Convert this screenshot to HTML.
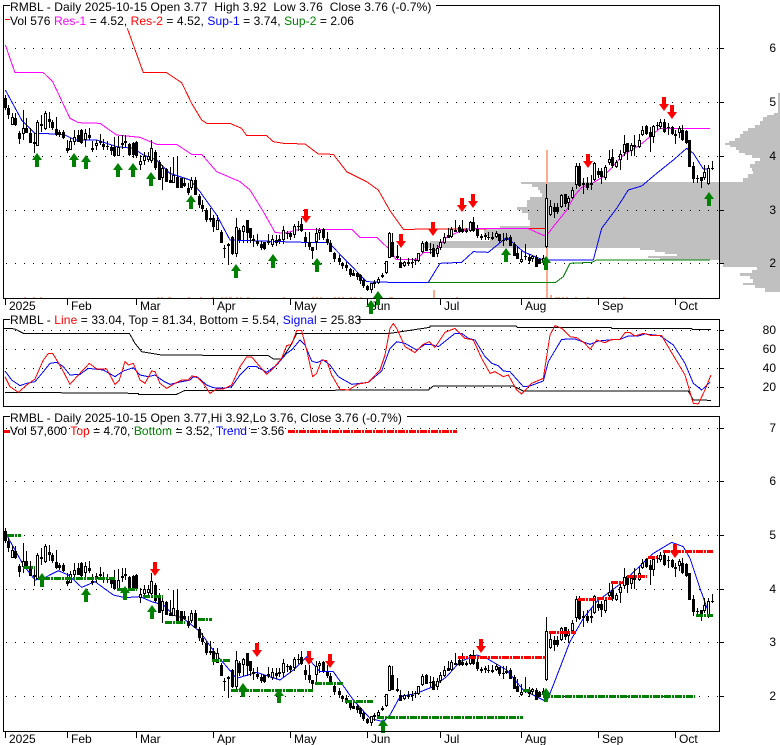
<!DOCTYPE html>
<html><head><meta charset="utf-8"><title>RMBL</title>
<style>
html,body{margin:0;padding:0;background:#fff;width:780px;height:745px;overflow:hidden}
svg{display:block;position:absolute;left:0;top:0}
text{font-family:"Liberation Sans",Arial,sans-serif;font-size:12px;fill:#000;white-space:pre}
.l{fill:none;shape-rendering:crispEdges}
.z{fill:none;stroke-width:3;stroke-linejoin:round;shape-rendering:crispEdges}
.dr{fill:none;stroke:#f00;stroke-width:3;stroke-dasharray:7 1 2 1;shape-rendering:crispEdges}
.dg{fill:none;stroke:#008000;stroke-width:3;stroke-dasharray:7 1 2 1;shape-rendering:crispEdges}
</style></head><body>
<svg width="780" height="745" viewBox="0 0 780 745" xmlns="http://www.w3.org/2000/svg">
<defs>
<path id="u" d="M0 0L5 7H2V14H-2V7H-5Z" fill="#008000"/>
<path id="d" d="M0 0L-5-7H-2V-14H2V-7H5Z" fill="#f00"/>
<g id="candles">
<path class="l" stroke="#000" stroke-width="1" d="M5.5 95V110M8.5 105V119M12.5 113V125M15.5 113V126M19.5 131V144M23.5 110V140M26.5 118V133M30.5 128V143M34.5 133V153M37.5 120V146M41.5 115V132M45.5 111V130M49.5 112V128M52.5 120V130M56.5 117V136M59.5 130V137M63.5 130V139M67.5 140V153M70.5 138V150M74.5 130V145M78.5 130V142M81.5 129V144M85.5 129V147M89.5 128V140M92.5 141V152M96.5 140V150M100.5 134V145M103.5 139V150M107.5 141V150M111.5 145V155M114.5 137V157M118.5 136V156M122.5 135V149M125.5 135V147M129.5 143V156M133.5 142V158M136.5 141V158M140.5 155V170M144.5 152V165M148.5 152V162M151.5 140V163M155.5 150V170M159.5 160V180M162.5 165V190M166.5 168V182M170.5 167V183M173.5 157V183M177.5 156V188M181.5 178V188M184.5 178V187M188.5 183V195M191.5 177V190M195.5 177V195M199.5 194V208M202.5 200V212M206.5 208V222M210.5 208V222M213.5 215V232M217.5 215V222M221.5 230V243M224.5 245V258M228.5 243V265M232.5 236V255M236.5 218V257M239.5 228V243M243.5 225V243M247.5 220V243M250.5 228V243M253.5 235V247M257.5 234V246M261.5 241V250M264.5 242V250M268.5 234V245M272.5 235V247M276.5 235V246M279.5 235V244M283.5 226V244M287.5 231V239M290.5 232V240M294.5 224V238M298.5 221V231M301.5 218V232M305.5 232V247M309.5 232V250M312.5 247V259M316.5 228V250M319.5 228V240M323.5 228V240M327.5 232V245M330.5 240V252M334.5 252V262M339.5 255V265M342.5 262V269M346.5 262V271M350.5 268V277M353.5 270V276M357.5 272V280M360.5 274V284M363.5 278V288M367.5 285V291M371.5 283V293M374.5 280V288M378.5 277V284M382.5 273V278M386.5 261V274M389.5 232V258M392.5 233V257M397.5 245V259M400.5 257V268M404.5 261V267M408.5 258V266M412.5 258V268M415.5 258V265M418.5 253V262M422.5 241V253M426.5 241V251M430.5 243V254M433.5 244V257M437.5 245V257M440.5 239V250M444.5 233V244M448.5 228V238M451.5 227V238M455.5 220V232M459.5 225V233M462.5 220V233M466.5 228V233M470.5 221V232M473.5 217V232M477.5 225V238M481.5 234V240M485.5 233V240M488.5 232V240M492.5 232V240M496.5 231V238M499.5 234V243M503.5 233V246M506.5 233V241M510.5 235V246M514.5 242V256M517.5 246V259M521.5 251V263M525.5 244V260M529.5 254V264M532.5 255V262M536.5 255V267M539.5 258V264M543.5 255V265M546.5 184V248M550.5 200V216M554.5 203V218M557.5 203V214M561.5 194V208M565.5 194V207M568.5 196V210M572.5 187V199M576.5 163V189M579.5 163V187M583.5 178V194M587.5 177V190M591.5 175V190M594.5 162V181M598.5 168V178M601.5 168V184M605.5 165V180M609.5 150V165M612.5 149V168M616.5 160V168M620.5 150V170M624.5 135V156M627.5 143V160M631.5 143V156M634.5 135V156M639.5 134V148M642.5 126V136M646.5 125V135M650.5 127V152M653.5 125V143M657.5 122V130M660.5 119V129M664.5 119V133M668.5 123V135M672.5 126V135M675.5 130V144M679.5 126V138M682.5 125V141M686.5 130V144M689.5 140V167M693.5 162V183M697.5 175V183M701.5 177V188M704.5 165V180M708.5 165V185M712.5 161V170"/>
<path class="l" stroke="#000" stroke-width="3" d="M5.5 98V108M8.5 108V115M12.5 117V125M15.5 118V125M19.5 133V139M23.5 128V134M26.5 128V133M30.5 133V143M34.5 142V144M37.5 122V146M41.5 124V126M45.5 113V129M49.5 119V122M52.5 122V128M56.5 129V135M59.5 132V135M63.5 132V138M67.5 148V151M70.5 141V150M74.5 137V142M78.5 135V142M81.5 130V143M85.5 133V140M89.5 135V138M92.5 148V150M96.5 143V146M100.5 141V143M103.5 144V147M107.5 146V147M111.5 147V151M114.5 147V156M118.5 147V156M122.5 143V145M125.5 141V143M129.5 144V155M133.5 143V155M136.5 142V156M140.5 161V165M144.5 156V161M148.5 156V160M151.5 148V161M155.5 152V168M159.5 162V180M162.5 168V178M166.5 169V182M170.5 180V183M173.5 175V183M177.5 177V188M181.5 178V188M184.5 183V186M188.5 188V193M191.5 180V188M195.5 180V195M199.5 196V205M202.5 205V209M206.5 210V220M210.5 218V220M213.5 218V227M217.5 220V230M221.5 232V243M224.5 248V249M228.5 244V246M232.5 237V254M236.5 227V254M239.5 230V240M243.5 226V232M247.5 220V233M250.5 228V238M253.5 239V241M257.5 241V244M261.5 244V248M264.5 242V249M268.5 241V243M272.5 239V245M276.5 240V243M279.5 239V241M283.5 230V240M287.5 233V234M290.5 233V237M294.5 226V235M298.5 226V227M301.5 224V231M305.5 237V242M309.5 242V247M312.5 247V251M316.5 233V242M319.5 230V233M323.5 229V238M327.5 239V243M330.5 243V252M334.5 253V259M339.5 258V262M342.5 263V266M346.5 265V268M350.5 269V275M353.5 273V276M357.5 273V277M360.5 275V281M363.5 280V286M367.5 286V290M371.5 283V290M374.5 282V284M378.5 279V283M382.5 275V277M386.5 261V273M389.5 233V258M392.5 242V257M397.5 256V258M400.5 262V268M404.5 262V266M408.5 262V264M412.5 262V263M415.5 260V261M418.5 253V261M422.5 243V252M426.5 242V251M430.5 249V250M433.5 248V257M437.5 248V254M440.5 242V248M444.5 237V243M448.5 235V238M451.5 229V237M455.5 230V232M459.5 227V232M462.5 229V232M466.5 230V232M470.5 222V231M473.5 222V231M477.5 229V236M481.5 236V238M485.5 235V237M488.5 237V238M492.5 237V239M496.5 233V237M499.5 234V241M503.5 240V241M506.5 238V240M510.5 237V246M514.5 244V256M517.5 253V259M521.5 259V262M525.5 256V257M529.5 257V261M532.5 256V259M536.5 257V267M539.5 259V264M543.5 258V262M546.5 198V247M550.5 206V215M554.5 207V212M557.5 207V212M561.5 195V207M565.5 194V204M568.5 198V203M572.5 190V198M576.5 166V185M579.5 166V186M583.5 183V185M587.5 183V188M591.5 183V185M594.5 163V180M598.5 171V175M601.5 171V177M605.5 167V178M609.5 159V163M612.5 157V166M616.5 162V167M620.5 154V160M624.5 144V153M627.5 143V152M631.5 145V151M634.5 145V147M639.5 140V147M642.5 130V135M646.5 126V134M650.5 132V137M653.5 126V137M657.5 125V126M660.5 122V127M664.5 122V132M668.5 127V128M672.5 127V134M675.5 134V136M679.5 128V133M682.5 130V140M686.5 131V143M689.5 140V167M693.5 166V179M697.5 178V179M701.5 177V181M704.5 172V178M708.5 168V184M712.5 168V169"/>
<path class="l" stroke="#fff" stroke-width="1" d="M12.5 118V124M23.5 129V133M37.5 123V145M45.5 114V128M70.5 142V149M74.5 138V141M85.5 134V139M96.5 144V145M118.5 148V155M140.5 162V164M144.5 157V160M148.5 157V159M151.5 149V160M162.5 169V177M173.5 176V182M191.5 181V187M217.5 221V229M228.5 245V245M236.5 228V253M243.5 227V231M272.5 240V244M279.5 240V240M283.5 231V239M294.5 227V234M316.5 234V241M319.5 231V232M371.5 284V289M378.5 280V282M382.5 276V276M386.5 262V272M389.5 234V257M404.5 263V265M408.5 263V263M418.5 254V260M422.5 244V251M437.5 249V253M440.5 243V247M444.5 238V242M451.5 230V236M466.5 231V231M470.5 223V230M496.5 234V236M506.5 239V239M521.5 260V261M532.5 257V258M543.5 259V261M546.5 199V246M550.5 207V214M561.5 196V206M568.5 199V202M572.5 191V197M576.5 167V184M591.5 184V184M594.5 164V179M605.5 168V177M609.5 160V162M616.5 163V166M620.5 155V159M624.5 145V152M631.5 146V150M634.5 146V146M639.5 141V146M642.5 131V134M653.5 127V136M660.5 123V126M675.5 135V135M679.5 129V132M704.5 173V177M708.5 169V183"/>
</g>
</defs>

<!-- TOP PANEL -->
<path fill="#c0c0c0" d="M778 93V113H774V115H767V117H763V121H760V125H755V128H748V131H743V134H740V138H735V141H729V143H725V145H730V147H736V150H739V153H745V155H752V158H760V161H755V164H750V168H752V171H753V174H748V178H743V182H521V184H532V187H538V190H540V193H542V197H530V200H527V207H517V210H522V213H528V220H530V226H500V229H484V236H490V241H430V243H423V248H640V250H655V252H665V254H677V256H648V258H660V260H719V263H723V267H757V270H752V273H740V276H750V279H753V283H743V285H755V288H765V292H778H780V93Z"/>
<path class="l" stroke="#000" stroke-dasharray="1 8" d="M6 48.5H719M6 102.5H719M6 156.5H719M6 210.5H719M6 263.5H719"/>
<g fill="#ffa98f">
<rect x="546" y="150" width="2" height="148"/>
<rect x="433" y="290" width="2" height="8"/>
<rect x="550" y="295" width="2" height="3"/>
<path d="M40 297h2v1h-2zM24 297h2v1h-2zM33 297h2v1h-2zM157 297h2v1h-2zM161 297h2v1h-2zM168 297h3v1h-3zM188 297h2v1h-2zM200 297h2v1h-2zM212 297h2v1h-2zM221 297h2v1h-2zM225 297h2v1h-2zM229 297h3v1h-3zM236 297h2v1h-2zM240 297h2v1h-2zM247 297h2v1h-2zM283 297h2v1h-2zM312 297h2v1h-2zM316 297h2v1h-2zM320 297h2v1h-2zM334 297h2v1h-2zM338 297h2v1h-2zM342 297h2v1h-2zM350 297h2v1h-2zM354 297h2v1h-2zM360 297h2v1h-2zM377 297h3v1h-3zM389 297h4v1h-4zM456 297h2v1h-2zM555 297h2v1h-2zM558 297h2v1h-2zM562 297h2v1h-2zM566 297h2v1h-2zM575 297h2v1h-2zM587 297h2v1h-2zM623 297h2v1h-2z"/>
</g>
<g transform="scale(.33333)">
<polyline class="z" stroke="#f00" points="382,85 430,218 500,218 545,248 575,310 605,360 620,370 690,370 725,385 740,407 800,407 820,425 850,430 915,432 955,462 1000,463 1040,515 1100,545 1135,570 1170,632 1210,688 1640,685"/>
<polyline class="z" stroke="#f0f" points="16,135 45,218 130,218 158,245 210,355 235,368 300,370 350,405 420,412 470,433 530,433 575,463 605,463 650,515 720,545 750,570 790,635 825,697 850,700 900,688 1055,688 1080,712 1130,712 1170,750 1188,778 1250,778 1270,758 1300,758 1340,712 1370,698 1410,686 1585,686 1630,706 1640,706 1660,680 1700,630 1725,585 1745,562 1780,548 1810,530 1870,465 1920,435 1950,410 1980,385 2130,385"/>
<polyline class="z" stroke="#00f" points="16,270 65,360 105,400 170,402 195,405 225,420 290,420 350,440 400,445 430,465 470,480 510,520 570,540 600,575 650,645 690,720 910,727 985,727 1100,845 1170,847 1285,847 1320,790 1385,787 1420,755 1465,757 1520,712 1570,755 1630,780 1780,780 1805,685 1850,625 1885,570 1925,558 1970,520 2020,480 2060,445 2080,460 2110,507 2130,507"/>
<polyline class="z" stroke="#008000" points="1285,847 1667,847 1690,830 1710,790 1775,787 1790,780 2130,780"/>
</g>
<use href="#candles"/>
<g>
<use href="#u" x="37" y="153"/><use href="#u" x="74" y="153"/><use href="#u" x="86" y="155"/><use href="#u" x="118" y="163"/><use href="#u" x="133" y="163"/><use href="#u" x="151" y="172"/><use href="#u" x="191" y="195"/><use href="#u" x="236" y="264"/><use href="#u" x="273" y="254"/><use href="#u" x="317" y="258"/><use href="#u" x="506" y="248"/><use href="#u" x="546" y="256"/><use href="#u" x="709" y="192"/>
<use href="#d" x="306" y="223"/><use href="#d" x="401" y="248"/><use href="#d" x="433" y="236"/><use href="#d" x="462" y="212"/><use href="#d" x="473" y="208"/><use href="#d" x="588" y="168"/><use href="#d" x="664" y="111"/><use href="#d" x="672" y="119"/>
</g>
<path class="l" stroke="#000" d="M3.5 5V298.5M3 298.5H720M719.5 5V298.5M3 5.5H10M436 5.5H720M719 48.5H724M719 102.5H724M719 156.5H724M719 210.5H724M719 263.5H724M5.5 299V305M67.5 299V305M136.5 299V305M213.5 299V305M290.5 299V305M367.5 299V305M440.5 299V305M521.5 299V305M598.5 299V305M675.5 299V305"/>
<path class="l" stroke="#f00" d="M5 19.5H10"/>
<g>
<text x="10" y="11" letter-spacing=".095">RMBL - Daily 2025-10-15 Open 3.77  High 3.92  Low 3.76  Close 3.76 (-0.7%)</text>
<text x="10" y="25" letter-spacing=".07">Vol 576 <tspan fill="#f0f">Res-1</tspan> = 4.52, <tspan fill="#f00">Res-2</tspan> = 4.52, <tspan fill="#00f">Sup-1</tspan> = 3.74, <tspan fill="#008000">Sup-2</tspan> = 2.06</text>
<text x="776" y="52" text-anchor="end">6</text><text x="776" y="106" text-anchor="end">5</text><text x="776" y="160" text-anchor="end">4</text><text x="776" y="214" text-anchor="end">3</text><text x="776" y="267" text-anchor="end">2</text>
<text x="9" y="310">2025</text><text x="71" y="310">Feb</text><text x="140" y="310">Mar</text><text x="217" y="310">Apr</text><text x="294" y="310">May</text><text x="371" y="310">Jun</text><text x="444" y="310">Jul</text><text x="525" y="310">Aug</text><text x="602" y="310">Sep</text><text x="679" y="310">Oct</text>
</g>
<use href="#u" x="378" y="291"/><use href="#u" x="371" y="300"/>

<!-- MIDDLE PANEL -->
<path class="l" stroke="#000" stroke-dasharray="1 8" d="M6 330.5H719M6 349.5H719M6 368.5H719M6 387.5H719"/>
<g transform="translate(0,295) scale(.33333)">
<polyline class="z" stroke="#000" points="15,100 30,100 45,102 70,115 388,115 405,145 425,170 485,180 805,182 820,192 845,192 870,155 890,115 1170,115 1290,97 1290,93 1548,93 1552,97 1832,97 1835,100 2075,100 2078,104 2133,104"/>
<polyline class="z" stroke="#000" points="15,292 415,295 415,298 530,298 553,287 1285,285 1300,273 1540,273 1570,288 2065,288 2080,315 2133,316"/>
<polyline class="z" stroke="#00f" points="15,228 35,255 60,272 80,265 105,260 130,230 150,205 170,202 190,215 210,240 240,238 265,220 310,225 345,245 370,228 400,218 420,240 445,245 465,240 490,258 510,268 545,260 570,255 580,245 595,248 620,270 640,278 670,280 695,275 720,240 745,215 770,215 800,232 830,210 860,175 875,165 900,135 915,150 935,198 950,203 970,195 990,210 1015,245 1055,268 1105,262 1145,228 1170,160 1190,140 1215,145 1250,165 1275,148 1290,148 1315,155 1365,115 1385,115 1405,130 1425,135 1455,185 1475,205 1495,212 1510,228 1530,230 1570,275 1590,273 1630,258 1645,200 1685,133 1725,132 1770,148 1795,138 1825,135 1860,133 1885,123 1915,123 1935,117 1980,122 2020,150 2055,205 2080,265 2105,285 2130,262"/>
<polyline class="z" stroke="#f00" points="15,245 30,275 55,292 80,270 105,252 130,195 145,175 158,175 185,220 210,268 235,240 268,205 290,222 320,222 345,268 358,255 375,200 385,210 400,205 420,255 435,265 455,228 465,230 480,265 500,280 520,268 545,255 565,255 575,243 590,245 610,265 630,295 650,282 670,282 695,270 720,215 740,186 755,186 780,215 800,238 820,220 845,190 860,152 875,148 890,107 905,107 920,165 938,245 950,235 965,195 980,197 995,240 1020,283 1045,285 1075,267 1105,262 1140,225 1155,180 1170,100 1180,85 1190,100 1215,155 1245,173 1270,148 1288,140 1305,157 1335,112 1365,100 1395,130 1420,135 1445,190 1470,235 1485,230 1510,245 1525,240 1550,285 1565,297 1595,265 1630,250 1650,120 1665,92 1685,100 1710,125 1730,128 1755,145 1770,163 1790,135 1815,143 1835,133 1860,133 1875,113 1890,113 1905,123 1930,115 1955,122 1985,122 2025,190 2055,240 2080,325 2095,327 2115,285 2133,240"/>
</g>
<path class="l" stroke="#000" d="M3.5 319V406.5M3 406.5H720M719.5 319V406.5M3 319.5H10M359 319.5H720M3 328.5H9M719 330.5H724M719 349.5H724M719 368.5H724M719 387.5H724"/>
<text x="10" y="324" letter-spacing=".1">RMBL - <tspan fill="#f00">Line</tspan> = 33.04, Top = 81.34, Bottom = 5.54, <tspan fill="#00f">Signal</tspan> = 25.83</text>
<text x="776" y="334" text-anchor="end">80</text><text x="776" y="353" text-anchor="end">60</text><text x="776" y="372" text-anchor="end">40</text><text x="776" y="391" text-anchor="end">20</text>

<!-- BOTTOM PANEL -->
<path class="l" stroke="#000" stroke-dasharray="1 8" d="M6 428.5H719M6 481.5H719M6 535.5H719M6 589.5H719M6 642.5H719M6 696.5H719"/>
<g transform="translate(0,405) scale(.33333)">
<polyline class="z" stroke="#00f" points="20,390 70,480 105,525 130,520 175,497 205,510 245,547 285,530 340,570 375,578 420,575 455,590 490,600 520,630 550,640 600,680 650,750 710,820 770,802 840,825 880,795 920,755 960,800 1000,800 1060,885 1110,940 1150,950 1170,930 1200,875 1250,865 1300,845 1340,815 1380,770 1430,750 1460,760 1520,795 1570,855 1640,890 1660,840 1710,710 1750,640 1790,590 1870,530 1960,445 2015,412 2050,425 2070,460 2100,550 2125,620"/>
</g>
<use href="#candles" transform="translate(0,433)"/>
<g transform="translate(0,.5)">
<path class="dr" d="M288 431H457M458 657H545M549 632H576M578 599H595M597 598H612M611 582H623M627 576H647M648 557H657M663 551H713"/>
<path class="dg" d="M7 535H21M23 567H35M43 578H115M117 589H137M143 596H163M165 622H185M198 619H212M212 660H230M231 690H313M315 683H343M345 701H373M377 717H523M523 690H530M543 696H695M696 615H713"/>
</g>
<g>
<use href="#u" x="42" y="573"/><use href="#u" x="86" y="588"/><use href="#u" x="125" y="586"/><use href="#u" x="152" y="605"/><use href="#u" x="243" y="683"/><use href="#u" x="279" y="689"/><use href="#u" x="383" y="719"/><use href="#u" x="546" y="688"/>
<use href="#d" x="155" y="576"/><use href="#d" x="257" y="657"/><use href="#d" x="309" y="665"/><use href="#d" x="330" y="668"/><use href="#d" x="481" y="653"/><use href="#d" x="675" y="558"/>
</g>
<path class="l" stroke="#000" d="M3.5 416V731.5M3 731.5H720M719.5 416V731.5M3 416.5H10M407 416.5H720M719 428.5H724M719 481.5H724M719 535.5H724M719 589.5H724M719 642.5H724M719 696.5H724M5.5 732V738M67.5 732V738M136.5 732V738M213.5 732V738M290.5 732V738M367.5 732V738M440.5 732V738M521.5 732V738M598.5 732V738M675.5 732V738"/>
<path d="M4 430h6v3H4z" fill="#f00"/>
<text x="10" y="422" letter-spacing=".09">RMBL - Daily 2025-10-15 Open 3.77,Hi 3.92,Lo 3.76, Close 3.76 (-0.7%)</text>
<text x="10" y="435" letter-spacing=".04">Vol 57,600 <tspan fill="#f00">Top</tspan> = 4.70, <tspan fill="#008000">Bottom</tspan> = 3.52, <tspan fill="#00f">Trend</tspan> = 3.56</text>
<text x="776" y="432" text-anchor="end">7</text><text x="776" y="485" text-anchor="end">6</text><text x="776" y="539" text-anchor="end">5</text><text x="776" y="593" text-anchor="end">4</text><text x="776" y="646" text-anchor="end">3</text><text x="776" y="700" text-anchor="end">2</text>
<text x="9" y="743">2025</text><text x="71" y="743">Feb</text><text x="140" y="743">Mar</text><text x="217" y="743">Apr</text><text x="294" y="743">May</text><text x="371" y="743">Jun</text><text x="444" y="743">Jul</text><text x="525" y="743">Aug</text><text x="602" y="743">Sep</text><text x="679" y="743">Oct</text>
</svg>
</body></html>
